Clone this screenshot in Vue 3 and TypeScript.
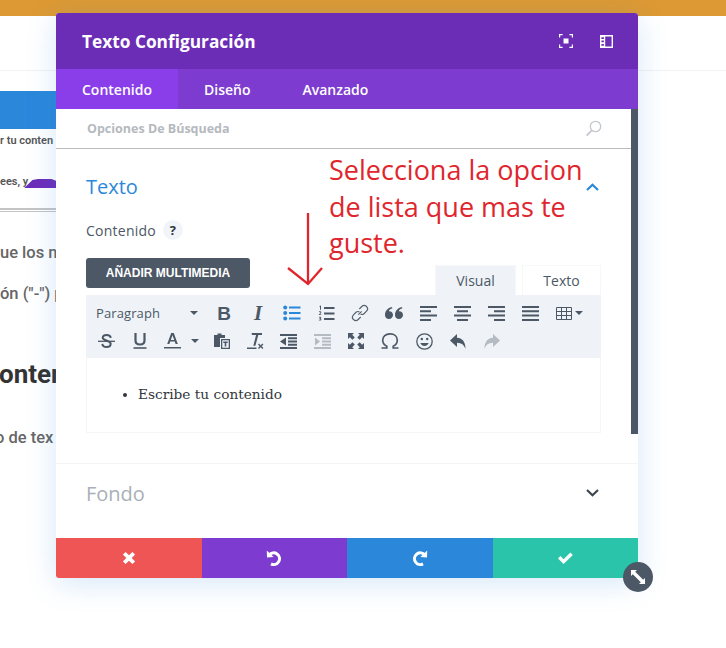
<script setup lang="ts">
const tabs = ["Contenido", "Diseño", "Avanzado"];
const noteLines = ["Selecciona la opcion", "de lista que mas te", "guste."];
</script>

<template>
  <div class="page">
    <!-- pagina detras del modal -->
    <div class="topbar"></div>
    <div class="site-head"></div>
    <div class="behind">
      <div class="blue-bar"></div>
      <div class="small-line first">r tu conten</div>
      <div class="small-line second">ees, y<span class="purple-bump"></span></div>
      <div class="double-rule"></div>
      <p class="para one">ue los m</p>
      <p class="para two">ón ("-") p</p>
      <h2 class="heading">onten</h2>
      <p class="para three">o de tex</p>
    </div>

    <div class="modal">
      <header class="modal-head">
        <h1>Texto Configuración</h1>
        <div class="head-icons">
          <svg width="14" height="14" viewBox="0 0 14 14" fill="none" stroke="#fff" stroke-width="1.2">
            <path d="M.6 3.6V.6h3M10.4.6h3v3M13.4 10.4v3h-3M3.6 13.4h-3v-3" />
            <rect x="4.5" y="4.5" width="5" height="5" fill="#fff" stroke="none" />
          </svg>
          <svg width="13" height="13" viewBox="0 0 13 13">
            <path fill="#fff" d="M0 0h13v13H0zM5.2 1.4v10.2h6.4V1.4zM1.4 2.2v1.7h2.5V2.2zM1.4 5.6v1.7h2.5V5.6zM1.4 9v1.7h2.5V9z" fill-rule="evenodd" />
          </svg>
        </div>
      </header>

      <nav class="modal-tabs">
        <div v-for="(t, i) in tabs" :key="t" class="tab" :class="{ active: i === 0 }">{{ t }}</div>
      </nav>

      <div class="modal-body">
        <div class="scroll-area">
          <div class="search">
            <span>Opciones De Búsqueda</span>
            <svg width="17" height="17" viewBox="0 0 17 17" fill="none" stroke="#c4c8cc" stroke-width="1.3">
              <circle cx="10.5" cy="6.5" r="5.2" />
              <path d="M6.8 10.3 1.6 15.6" stroke-width="1.8" />
            </svg>
          </div>

          <section class="group">
            <div class="group-title">
              <span>Texto</span>
              <svg width="13" height="8" viewBox="0 0 13 8" fill="none" stroke="#2b87da" stroke-width="2.2">
                <path d="M1 7 6.5 1.8 12 7" />
              </svg>
            </div>
            <div class="field-label">
              <span>Contenido</span>
              <span class="help">?</span>
            </div>
            <button class="media-btn" type="button">AÑADIR MULTIMEDIA</button>

            <div class="editor-tabs">
              <div class="etab on">Visual</div>
              <div class="etab">Texto</div>
            </div>

            <div class="toolbar">
              <div class="row row-one">
                <div class="format">
                  <span>Paragraph</span>
                  <i class="caret"></i>
                </div>
                <div class="tb"><span class="glyph-b">B</span></div>
                <div class="tb"><span class="glyph-i">I</span></div>
                <div class="tb">
                  <svg width="18" height="16" viewBox="0 0 18 16" fill="#2b87da">
                    <circle cx="2.2" cy="2.6" r="2" /><circle cx="2.2" cy="8" r="2" /><circle cx="2.2" cy="13.4" r="2" />
                    <path d="M6 1.5h11.5v2H6zM6 7h11.5v2H6zM6 12.4h11.5v2H6z" />
                  </svg>
                </div>
                <div class="tb">
                  <svg width="17" height="17" viewBox="0 0 17 17" fill="#4c5866">
                    <path d="M6 2h10.5v2H6zM6 7.5h10.5v2H6zM6 13h10.5v2H6z" />
                    <path d="M1.4 1 3 .4v4.4H2V1.600l-.6.2zM.9 6.600c.8-.6 2.400-.5 2.400.7 0 1-1 1.400-1.500 2h1.500v.8H.8v-.7c.8-.9 1.500-1.300 1.500-2 0-.5-.7-.5-1.300 0zM.9 12c.8-.5 2.400-.4 2.400.6 0 .5-.3.800-.7.900.5.100.8.400.8 1 0 1.200-1.700 1.300-2.600.7l.2-.7c.5.300 1.400.4 1.400-.1 0-.4-.5-.500-1-.500v-.7c.5 0 .9-.1.900-.4 0-.4-.8-.3-1.300 0z" />
                  </svg>
                </div>
                <div class="tb">
                  <svg width="18" height="18" viewBox="0 0 18 18" fill="none" stroke="#56616e" stroke-width="1.200">
                    <path d="M7.300 10.700 10.700 7.300" />
                    <path d="M8.300 5 10.800 2.500a3 3 0 0 1 4.700 4.700L13 9.700a3 3 0 0 1-3.400.4" />
                    <path d="M9.700 13 7.200 15.500a3 3 0 0 1-4.700-4.700L5 8.300a3 3 0 0 1 3.400-.4" />
                  </svg>
                </div>
                <div class="tb">
                  <svg width="18" height="12" viewBox="0 0 18 12" fill="#4c5866">
                    <path d="M4 12C1.800 12 0 10.400 0 8 0 4 2.500 1 6.800 0l.7 1.300C5.300 2 4.100 3.100 3.800 4.300 6.200 4 8 5.700 8 8c0 2.300-1.800 4-4 4zM14 12c-2.200 0-4-1.600-4-4 0-4 2.500-7 6.800-8l.7 1.300c-2.200.7-3.400 1.800-3.700 3C16.200 4 18 5.700 18 8c0 2.300-1.800 4-4 4z" />
                  </svg>
                </div>
                <div class="tb">
                  <svg width="17" height="15" viewBox="0 0 17 15" fill="#4c5866"><path d="M0 0h17v2H0zM0 4.300h11v2H0zM0 8.600h17v2H0zM0 13h11v2H0z" /></svg>
                </div>
                <div class="tb">
                  <svg width="17" height="15" viewBox="0 0 17 15" fill="#4c5866"><path d="M0 0h17v2H0zM3 4.300h11v2H3zM0 8.600h17v2H0zM3 13h11v2H3z" /></svg>
                </div>
                <div class="tb">
                  <svg width="17" height="15" viewBox="0 0 17 15" fill="#4c5866"><path d="M0 0h17v2H0zM6 4.300h11v2H6zM0 8.600h17v2H0zM6 13h11v2H6z" /></svg>
                </div>
                <div class="tb">
                  <svg width="17" height="15" viewBox="0 0 17 15" fill="#4c5866"><path d="M0 0h17v2H0zM0 4.300h17v2H0zM0 8.600h17v2H0zM0 13h17v2H0z" /></svg>
                </div>
                <div class="tb wide">
                  <svg width="16" height="13" viewBox="0 0 16 13" fill="none" stroke="#4c5866" stroke-width="1">
                    <path d="M.5.500h15v12H.5zM.5 4.500h15M.5 8.500h15M5.500.500v12M10.500.500v12" />
                  </svg>
                  <i class="caret"></i>
                </div>
              </div>

              <div class="row row-two">
                <div class="tb">
                  <svg width="17" height="15" viewBox="0 0 17 15" fill="none" stroke="#4c5866">
                    <path d="M12.800 3.800C12.500 2 10.800 1 8.600 1 6.300 1 4.700 2.100 4.700 3.800c0 3 8 2.500 8 6 0 2-1.800 3.200-4.100 3.200-2.400 0-4.100-1.200-4.300-3.200" stroke-width="2" />
                    <path d="M0 7.300h17" stroke-width="1.300" />
                  </svg>
                </div>
                <div class="tb">
                  <svg width="14" height="16" viewBox="0 0 14 16" fill="none" stroke="#4c5866">
                    <path d="M2.500 0v7.500c0 2.800 1.700 4 4.500 4s4.500-1.200 4.500-4V0" stroke-width="2.200" />
                    <path d="M.5 15h13" stroke-width="1.600" />
                  </svg>
                </div>
                <div class="tb color">
                  <svg width="17" height="16" viewBox="0 0 17 16" fill="#4c5866">
                    <path d="M7.200 0h2.600l4 11h-2.200l-.8-2.400H6.200L5.400 11H3.200zM6.800 6.900h3.400L8.500 2.200z" fill-rule="evenodd" />
                    <path d="M0 14h17v1.500H0z" />
                  </svg>
                  <i class="caret"></i>
                </div>
                <div class="tb">
                  <svg width="16" height="16" viewBox="0 0 16 16" fill="#4c5866">
                    <path d="M0 2h3.500V.500h4V2H11v3H6v9H0z" />
                    <path fill-rule="evenodd" d="M7 6h9v10H7zM8.300 7.300v7.400h6.400V7.300zM9.300 8.500h4.400v1.500h-1.400v3.500h-1.600V10H9.300z" />
                  </svg>
                </div>
                <div class="tb narrow">
                  <svg width="17" height="17" viewBox="0 0 17 17" fill="#4c5866">
                    <path d="M4.500 0H15v2h-3.700L8.400 12.800H6.300L9.100 2H5z" />
                    <path d="M0 14.500h9.500V16H0z" />
                    <path d="M11 11.500l1-1 1.700 1.700 1.700-1.700 1 1-1.700 1.700 1.700 1.700-1 1-1.700-1.700-1.700 1.700-1-1 1.700-1.700z" />
                  </svg>
                </div>
                <div class="tb">
                  <svg width="17" height="15" viewBox="0 0 17 15" fill="#4c5866">
                    <path d="M0 0h17v2H0zM8 3.250h9v2H8zM8 6.500h9v2H8zM8 9.750h9v2H8zM0 13h17v2H0z" />
                    <path d="M6 3.500v8L0 7.500z" />
                  </svg>
                </div>
                <div class="tb">
                  <svg width="17" height="15" viewBox="0 0 17 15" fill="#b4bbc2">
                    <path d="M0 0h17v2H0zM8 3.250h9v2H8zM8 6.500h9v2H8zM8 9.750h9v2H8zM0 13h17v2H0z" />
                    <path d="M1 3.500v8l5-4z" />
                  </svg>
                </div>
                <div class="tb">
                  <svg width="16" height="16" viewBox="0 0 16 16" fill="#4c5866">
                    <path d="M0 0h6L4.200 1.800 6.800 4.400 4.400 6.800 1.800 4.200 0 6zM16 0v6l-1.800-1.800-2.600 2.600-2.400-2.400 2.600-2.600L10 0zM16 16h-6l1.800-1.800-2.600-2.600 2.400-2.400 2.600 2.600L16 10zM0 16v-6l1.800 1.800 2.600-2.600 2.400 2.400-2.600 2.600L6 16z" />
                  </svg>
                </div>
                <div class="tb">
                  <svg width="18" height="16" viewBox="0 0 18 16" fill="none" stroke="#4c5866" stroke-width="1.700">
                    <path d="M.5 15h5.300v-1.800C3.200 12 1.700 9.800 1.700 7.200 1.700 3.500 4.700.9 9 .9s7.300 2.600 7.300 6.300c0 2.600-1.500 4.800-4.100 6V15h5.300" />
                  </svg>
                </div>
                <div class="tb">
                  <svg width="17" height="17" viewBox="0 0 17 17" fill="none" stroke="#4c5866" stroke-width="1.300">
                    <circle cx="8.500" cy="8.500" r="7.700" />
                    <path d="M4.300 10c.8 2 2.400 3 4.200 3s3.400-1 4.200-3z" fill="#4c5866" stroke="none" />
                    <circle cx="5.800" cy="6" r="1.200" fill="#4c5866" stroke="none" />
                    <circle cx="11.200" cy="6" r="1.200" fill="#4c5866" stroke="none" />
                  </svg>
                </div>
                <div class="tb">
                  <svg width="16" height="15" viewBox="0 0 16 15" fill="#4c5866">
                    <path d="M7 0v3.700c5 .3 8.500 3.500 8.500 11.300-1.500-4.300-3.800-6-8.500-6.200V13L0 6.500z" />
                  </svg>
                </div>
                <div class="tb">
                  <svg width="16" height="15" viewBox="0 0 16 15" fill="#b4bbc2">
                    <path d="M9 0v3.700C4 4 .5 7.200.5 15 2 10.700 4.300 9 9 8.800V13l7-6.500z" />
                  </svg>
                </div>
              </div>
            </div>

            <div class="editor">
              <ul><li>Escribe tu contenido</li></ul>
            </div>
          </section>
        </div>
        <div class="scrollbar"></div>
      </div>

      <section class="collapsed">
        <span>Fondo</span>
        <svg width="13" height="8" viewBox="0 0 13 8" fill="none" stroke="#3d4751" stroke-width="2.200">
          <path d="M1 1 6.500 6.200 12 1" />
        </svg>
      </section>

      <footer class="actions">
        <div class="act red">
          <svg width="14" height="14" viewBox="0 0 14 14" fill="#fff">
            <path d="M3.600.9 7 4.300 10.400.9l2.700 2.700L9.700 7l3.400 3.400-2.700 2.700L7 9.700l-3.400 3.400-2.700-2.700L4.300 7 .9 3.600z" />
          </svg>
        </div>
        <div class="act purple">
          <svg width="16" height="16" viewBox="0 0 16 16" fill="none" stroke="#fff" stroke-width="3">
            <path d="M3.200 5A5.800 5.800 0 1 1 5 13.800" />
            <path d="M.8 .6 1 7.400l6.600-.4z" fill="#fff" stroke="none" />
          </svg>
        </div>
        <div class="act blue">
          <svg width="16" height="16" viewBox="0 0 16 16" fill="none" stroke="#fff" stroke-width="3">
            <path d="M12.800 5A5.800 5.800 0 1 0 11 13.800" />
            <path d="M15.200 .6 15 7.400 8.400 7z" fill="#fff" stroke="none" />
          </svg>
        </div>
        <div class="act green">
          <svg width="15" height="12" viewBox="0 0 15 12" fill="#fff">
            <path d="M2.400 4 5.600 7.200 12.400.5 14.900 3 5.600 12 0 6.500z" />
          </svg>
        </div>
      </footer>

      <div class="resize">
        <svg width="18" height="18" viewBox="0 0 18 18" fill="#fff">
          <path d="M2 2h6L6.200 3.800 14.200 11.800 16 10v6h-6l1.800-1.800L3.800 6.200 2 8z" />
        </svg>
      </div>
    </div>

    <!-- anotacion roja encima de la captura -->
    <div class="note">
      <div v-for="l in noteLines" :key="l">{{ l }}</div>
    </div>
    <svg class="arrow" width="40" height="76" viewBox="0 0 40 76" fill="none" stroke="#e0262d" stroke-width="2.300">
      <path d="M21 1v71" />
      <path d="M1 56 21 72 35 56" />
    </svg>
  </div>
</template>

<style>
html,
body {
  margin: 0;
  background: #fff;
}
</style>

<style scoped>
.page {
  position: relative;
  width: 726px;
  height: 648px;
  overflow: hidden;
  background: #fff;
  font-family: "Open Sans", sans-serif;
}

.topbar {
  height: 16px;
  background: #dd9933;
}

.site-head {
  height: 54px;
  border-bottom: 1px solid #f1f2f4;
}

.behind {
  width: 56px;
  overflow: hidden;
  white-space: nowrap;
  font-family: Roboto, sans-serif;
  color: #666;
}

.blue-bar {
  height: 38px;
  margin-top: 20px;
  background: #2b87da;
}

.small-line {
  font-size: 11px;
  font-weight: 600;
  line-height: 14px;
  color: #555;
}

.small-line.first {
  margin-top: 5px;
}

.small-line.second {
  margin-top: 27px;
  display: flex;
}

.purple-bump {
  width: 34px;
  height: 9px;
  margin: 4px 0 0 -4px;
  background: #6c2eb9;
  flex: none;
  clip-path: polygon(0 100%, 24% 10%, 40% 0, 80% 0, 100% 30%, 100% 100%);
}

.double-rule {
  height: 1px;
  margin-top: 19px;
  border-top: 2px solid #c4c4c4;
  border-bottom: 1px solid #c4c4c4;
}

.para {
  margin: 0;
  font-size: 16.500px;
  font-weight: 500;
  line-height: 20px;
}

.para.one {
  margin-top: 31px;
}

.para.two {
  margin-top: 21px;
}

.para.three {
  margin: 39px 0 0 -5px;
}

.heading {
  margin: 55px 0 0 -1px;
  font-size: 26px;
  font-weight: 700;
  line-height: 30px;
  color: #333;
}

.modal {
  position: absolute;
  left: 56px;
  top: 13px;
  width: 582px;
  height: 565px;
  display: flex;
  flex-direction: column;
  border-radius: 3px;
  background: #fff;
  box-shadow: 0 5px 30px rgba(43, 135, 218, 0.2);
}

.modal-head {
  height: 56px;
  flex: none;
  display: flex;
  align-items: center;
  justify-content: space-between;
  padding: 0 25px 0 26px;
  background: #6b2db5;
  border-radius: 3px 3px 0 0;
  color: #fff;
}

.modal-head h1 {
  margin: 0;
  font-size: 17.300px;
  font-weight: 700;
}

.head-icons {
  display: flex;
  align-items: center;
  gap: 27px;
}

.modal-tabs {
  height: 40px;
  flex: none;
  display: flex;
  background: #7d3bcf;
  color: #fff;
  font-size: 14px;
  font-weight: 600;
}

.tab {
  display: flex;
  align-items: center;
  padding: 0 26px;
}

.tab.active {
  width: 122px;
  box-sizing: border-box;
  background: #8a3eea;
}

.modal-body {
  height: 325px;
  flex: none;
  display: flex;
}

.scroll-area {
  flex: 1;
  overflow: hidden;
}

.scrollbar {
  width: 7px;
  background: #4c5866;
}

.search {
  height: 39px;
  box-sizing: content-box;
  display: flex;
  align-items: center;
  justify-content: space-between;
  padding: 0 29px 0 31px;
  border-bottom: 1px solid #bcbcbc;
  color: #b5b9be;
  font-size: 12.500px;
  font-weight: 700;
  line-height: 41px;
}

.group {
  padding: 0 30px;
}

.group-title {
  height: 29px;
  margin-top: 23px;
  display: flex;
  align-items: center;
  justify-content: space-between;
  padding-right: 2px;
  color: #2b87da;
  font-size: 20px;
}

.field-label {
  display: flex;
  align-items: center;
  gap: 7px;
  height: 22px;
  margin-top: 18px;
  color: #4c5866;
  font-size: 14px;
  letter-spacing: 0.25px;
}

.help {
  width: 20px;
  height: 20px;
  border-radius: 50%;
  background: #f1f5f9;
  display: flex;
  align-items: center;
  justify-content: center;
  color: #32373c;
  font-size: 13px;
  font-weight: 700;
}

.media-btn {
  display: block;
  width: 164px;
  height: 30px;
  margin-top: 17px;
  padding: 0;
  border: 0;
  border-radius: 3px;
  background: #4c5866;
  color: #fff;
  font-family: "Liberation Sans", sans-serif;
  font-size: 12px;
  font-weight: 700;
}

.editor-tabs {
  display: flex;
  justify-content: flex-end;
  gap: 6px;
  height: 30px;
  margin-top: -23px;
  font-size: 14px;
  color: #4c5866;
}

.etab {
  width: 79px;
  display: flex;
  align-items: center;
  justify-content: center;
  border: 1px solid #f5f7fa;
  border-bottom: 0;
  box-sizing: border-box;
}

.etab.on {
  width: 81px;
  background: #eff3f8;
}

.toolbar {
  height: 63px;
  box-sizing: border-box;
  padding-top: 4px;
  background: #eff3f8;
}

.row {
  display: flex;
  height: 28px;
  align-items: center;
}

.row-two {
  padding-left: 3px;
}

.format {
  width: 121px;
  flex: none;
  box-sizing: border-box;
  padding: 0 9px 0 10px;
  display: flex;
  align-items: center;
  justify-content: space-between;
  color: #4c5866;
  font-size: 13px;
  letter-spacing: 0.1px;
}

.tb {
  width: 34px;
  flex: none;
  display: flex;
  align-items: center;
  justify-content: center;
  color: #4c5866;
}

.tb.wide {
  width: 40px;
  gap: 3px;
  justify-content: flex-start;
  padding-left: 9px;
}

.tb.color {
  width: 48px;
  gap: 10px;
  justify-content: flex-start;
  padding-left: 7px;
  box-sizing: border-box;
}

.tb.narrow {
  width: 32px;
}

.glyph-b {
  font-family: "Liberation Sans", sans-serif;
  font-size: 19px;
  font-weight: 700;
  line-height: 1;
}

.glyph-i {
  font-family: "Liberation Serif", serif;
  font-size: 21px;
  font-style: italic;
  font-weight: 700;
  line-height: 1;
}

.caret {
  display: block;
  width: 0;
  height: 0;
  border-left: 4px solid transparent;
  border-right: 4px solid transparent;
  border-top: 4px solid #4c5866;
  flex: none;
}

.editor {
  height: 75px;
  box-sizing: border-box;
  border: 1px solid #f3f5f8;
  border-top: 0;
  color: #32373c;
  font-family: "DejaVu Serif", serif;
  font-size: 13.700px;
}

.editor ul {
  margin: 0;
  padding: 28px 0 0 51px;
}

.collapsed {
  height: 75px;
  flex: none;
  box-sizing: border-box;
  margin-top: 29px;
  padding: 0 39px 16px 30px;
  border-top: 1px solid #f3f4f6;
  display: flex;
  align-items: center;
  justify-content: space-between;
  color: #a8b0b8;
  font-size: 20px;
}

.actions {
  height: 40px;
  flex: none;
  margin-top: auto;
  display: flex;
  border-radius: 0 0 3px 3px;
  overflow: hidden;
}

.act {
  flex: 1;
  display: flex;
  align-items: center;
  justify-content: center;
}

.red {
  background: #ef5555;
}

.purple {
  background: #7d3bcf;
}

.blue {
  background: #2b87da;
}

.green {
  background: #29c4a9;
}

.resize {
  position: absolute;
  right: -15px;
  bottom: -14px;
  width: 30px;
  height: 30px;
  border-radius: 50%;
  background: #4c5866;
  display: flex;
  align-items: center;
  justify-content: center;
}

.note {
  position: absolute;
  left: 329px;
  top: 152px;
  color: #e0262d;
  font-size: 27px;
  line-height: 36.500px;
  white-space: nowrap;
}

.arrow {
  position: absolute;
  left: 287px;
  top: 212px;
}
</style>
